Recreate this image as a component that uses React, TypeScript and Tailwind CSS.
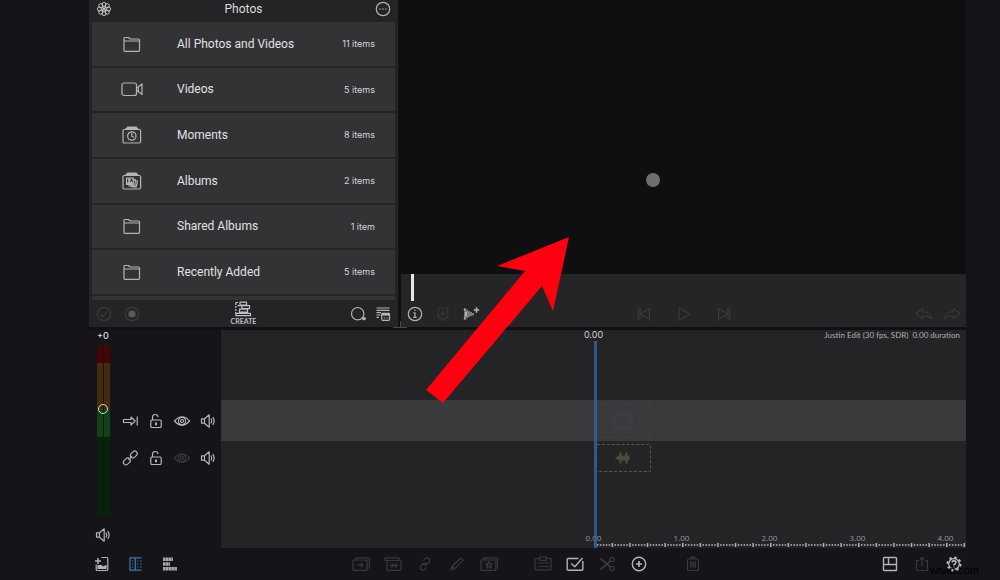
import { useState } from "react";
import type { ReactNode } from "react";
import clsx from "clsx";

type AlbumKind = "folder" | "video" | "moments" | "albums";

interface Album {
  name: string;
  count: string;
  kind: AlbumKind;
}

const ALBUMS: Album[] = [
  { name: "All Photos and Videos", count: "11 items", kind: "folder" },
  { name: "Videos", count: "5 items", kind: "video" },
  { name: "Moments", count: "8 items", kind: "moments" },
  { name: "Albums", count: "2 items", kind: "albums" },
  { name: "Shared Albums", count: "1 item", kind: "folder" },
  { name: "Recently Added", count: "5 items", kind: "folder" },
];

const RULER_LABELS = ["0.00", "1.00", "2.00", "3.00", "4.00"];

// 24px icon grid, thin strokes
function Icon({ children, size = "size-6" }: { children: ReactNode; size?: string }) {
  return (
    <svg
      viewBox="0 0 24 24"
      className={clsx("shrink-0", size)}
      fill="none"
      stroke="currentColor"
      strokeWidth="1.2"
      strokeLinejoin="round"
      aria-hidden="true"
    >
      {children}
    </svg>
  );
}

const albumIcons: Record<AlbumKind, ReactNode> = {
  folder: <path d="M4 18.5V6.6Q4 5.5 5 5.5H8.6L10 7H18.4Q19.5 7 19.5 8V18.3Q19.5 19.3 18.5 19.3H5Q4 19.3 4 18.3M4 9H19.5" />,
  video: (
    <>
      <rect x="2" y="6" width="14.5" height="12.5" rx="2" />
      <path d="M16.5 11L18.3 10V14.5L16.5 13.5M18.3 10L22 7V17.5L18.3 14.5" />
    </>
  ),
  moments: (
    <>
      <rect x="3" y="6.5" width="17.6" height="13.5" rx="1.2" />
      <path d="M5.5 5.3H18.2M7 4.2H16.8" />
      <circle cx="11.8" cy="13" r="4.2" />
      <path d="M11.8 10V13.2L14 14.3" />
    </>
  ),
  albums: (
    <>
      <rect x="3" y="6.5" width="17.6" height="13.5" rx="1.2" />
      <path d="M5.5 5.3H18.2M7 4.2H16.8" />
      <path d="M6.5 9.2H13.2V15.5H6.5ZM13.2 10.2L15.4 10.8L14.9 16.8L8.5 16.8M15.4 11.5L17.4 12.4L16.1 18.2L10.5 17.4" />
      <path d="M7 15.2L9 12.6L10.4 14L11.4 13L12.8 15.2Z" fill="currentColor" />
      <circle cx="9.3" cy="11" r="0.8" />
    </>
  ),
};

const icons = {
  flower: (
    <g strokeWidth="1">
      <circle cx="12" cy="7.4" r="2" />
      <circle cx="15.3" cy="8.7" r="2" />
      <circle cx="16.6" cy="12" r="2" />
      <circle cx="15.3" cy="15.3" r="2" />
      <circle cx="12" cy="16.6" r="2" />
      <circle cx="8.7" cy="15.3" r="2" />
      <circle cx="7.4" cy="12" r="2" />
      <circle cx="8.7" cy="8.7" r="2" />
      <path d="M12 9.4V14.6M9.4 12H14.6M10.1 10.1L13.9 13.9M13.9 10.1L10.1 13.9" />
    </g>
  ),
  more: (
    <>
      <circle cx="12" cy="12" r="6.7" />
      <path d="M8.2 12H9.8M11.2 12H12.8M14.2 12H15.8" />
    </>
  ),
  checkCircle: (
    <>
      <circle cx="12" cy="12" r="6.7" />
      <path d="M8.5 12L11 14.8L15.5 9" />
    </>
  ),
  record: (
    <>
      <circle cx="12" cy="12" r="6.7" stroke="#3d3c3f" />
      <circle cx="12" cy="12" r="3" fill="currentColor" />
    </>
  ),
  create: (
    <>
      <path d="M4.8 6V18.5" strokeDasharray="2 1" />
      <path d="M4.5 5.5H7M9 5.2H15.5V8H9ZM11 8.6H18.5V11.6H11V8.6M6.5 8.6H11M8.5 12.2H16.5V15.2H8.5ZM5 16.4H19.5V18.6H5Z" />
    </>
  ),
  search: (
    <>
      <circle cx="11.7" cy="11.7" r="6.2" />
      <path d="M16 16.2L18 18" strokeWidth="1.5" />
      <circle cx="18.3" cy="16.6" r="1" fill="currentColor" />
    </>
  ),
  sort: (
    <>
      <path d="M4.5 6H17.5M4.5 8.3H17.5M4.5 10.6H9M4.5 13H8.5M4.5 15.3H7" />
      <rect x="9.8" y="11.3" width="7.7" height="7" rx="0.8" />
      <path d="M10 12.6H17.3" strokeWidth="2" />
      <path d="M11.8 16H13M14.4 16H15.6" />
    </>
  ),
  info: (
    <>
      <circle cx="12" cy="12" r="6.7" />
      <path d="M10.5 10.8H12V15M10.3 15.3H13.7M11.3 8.3H12.5" />
    </>
  ),
  marker: <path d="M7.2 6H16.8V14.5L12 18.5L7.2 14.5ZM12 8.8V14M9.4 11.4H14.6" />,
  audioFx: (
    <>
      <path d="M6 6V18M8 7.5V16.5M10 9V15M12 10V14M14 11V13.5M5 7L7.5 12L5 17" />
      <path d="M14.8 8H20.2M17.5 5.3V10.7" strokeWidth="1.5" />
    </>
  ),
  prev: <path d="M6 6V18M8 6V18M17.5 6.2V17.8L8.5 12Z" />,
  play: <path d="M7 5.7L18 12L7 18.3Z" />,
  next: <path d="M18 6V18M16 6V18M6.5 6.2V17.8L15.5 12Z" />,
  undo: <path d="M4 11.5L10.5 6.5V9.5Q18.5 9.5 20 17Q16.5 13.5 10.5 13.8V16.5Z" />,
  redo: <path d="M20 11.5L13.5 6.5V9.5Q5.5 9.5 4 17Q7.5 13.5 13.5 13.8V16.5Z" />,
  insert: <path d="M5.5 10.5H13V8L17.2 12L13 16V13.5H5.5ZM19.2 7.5V16.5" />,
  link: (
    <>
      <rect x="5" y="13" width="7.6" height="5" rx="2.5" transform="rotate(-45 8.8 15.5)" />
      <rect x="12" y="6" width="7.6" height="5" rx="2.5" transform="rotate(-45 15.8 8.5)" />
      <path d="M10.5 13.8L14 10.2" />
    </>
  ),
  unlock: (
    <>
      <rect x="6.8" y="11" width="10.4" height="7.5" rx="1" />
      <path d="M8.5 11V8Q8.5 5.5 11.2 5.5Q13.8 5.5 14 8" />
      <path d="M12 13.5V16.2" strokeWidth="2" />
    </>
  ),
  eye: (
    <>
      <path d="M4.5 12Q12 3.5 19.5 12Q12 20.5 4.5 12Z" />
      <circle cx="12" cy="12" r="3.6" />
      <circle cx="12" cy="12" r="1.5" />
    </>
  ),
  speaker: (
    <>
      <path d="M5.5 9.8H8.5V14.2H5.5ZM8.5 9.8L13.2 5.8V18.2L8.5 14.2" />
      <path d="M15 9.5Q16.6 12 15 14.5M16.8 8.2Q19.4 12 16.8 15.8" />
    </>
  ),
  addMedia: (
    <>
      <path d="M11.5 5.5H16.8Q17.8 5.5 17.8 6.5V17.5Q17.8 18.5 16.8 18.5H7.2Q6.2 18.5 6.2 17.5V12.5" />
      <path d="M5 9H11M8 6V12" strokeWidth="1.5" />
      <path d="M8 13.5V16.5H16V13.5L13.5 15.2L11 13.5Z" fill="currentColor" />
    </>
  ),
  trackList: (
    <>
      <path d="M17.5 5.8H6V18.2H17.5M11.3 5.8V18.2" />
      <path d="M8 9H9.4M8 12H9.4M8 15H9.4M13 9H14.4M16 9H17.6M13 12H14.4M16 12H17.6M13 15H14.4M16 15H17.6" />
    </>
  ),
  trackBars: (
    <path d="M5 7.2H15M5 12H12M5 16.8H19" strokeWidth="3.4" strokeDasharray="2.6 0.3" />
  ),
  insertClip: (
    <>
      <path d="M6.5 8V5.8H20.3V16H18.5" />
      <rect x="4" y="8" width="14" height="10.3" rx="0.8" />
      <path d="M8 13.2H13.8M11.8 11L14 13.2L11.8 15.4" />
    </>
  ),
  overwrite: (
    <>
      <path d="M6.5 8.5H4V5.8H18V8.5" />
      <rect x="6" y="8.5" width="14" height="9.8" rx="0.8" />
      <path d="M8.5 13.5H17.5M10.5 11.3L12.5 13.5L10.5 15.7M15.5 11.3L13.5 13.5L15.5 15.7" />
    </>
  ),
  chain: (
    <path d="M10.5 8.5L12 6.6Q14 5 15.8 6.6Q17.5 8.5 16 10.4L13.8 12.4Q12 13.4 10.5 12M13.2 15.5L11.8 17.3Q9.8 19 8 17.3Q6.4 15.5 8 13.6L10.2 11.5Q12 10.5 13.5 12" />
  ),
  pencil: <path d="M6 18L7.2 14.3L15.8 5.8L18.2 8.2L9.7 16.8ZM7.2 14.3L9.7 16.8" />,
  starClip: (
    <>
      <path d="M6.5 8V5.8H20.3V16H18.8" />
      <path d="M4 8H18.8V18.3H4Z" />
      <path d="M12 9.8L13 12H15.3L13.5 13.5L14.2 16L12 14.5L9.8 16L10.5 13.5L8.7 12H11Z" />
    </>
  ),
  clipboard: (
    <>
      <path d="M8 6.5H4V17.8H20V6.5H16M8.5 5H15.5V8.3H8.5Z" />
      <path d="M8 11H18M8 14.5H18M5.8 11H6.8M5.8 14.5H6.8" />
    </>
  ),
  select: (
    <path d="M15.5 6.5H5.2Q4.2 6.5 4.2 7.5V17.3Q4.2 18.3 5.2 18.3H18.8Q19.8 18.3 19.8 17.3V9M8.2 11.5L11.8 14.7L19.5 6" strokeWidth="1.4" />
  ),
  scissors: (
    <>
      <path d="M5.5 6.5L15.5 15M5.5 17.5L15.5 9" strokeWidth="1.8" />
      <circle cx="17" cy="7.5" r="2.2" />
      <circle cx="17" cy="16.5" r="2.2" />
    </>
  ),
  add: (
    <>
      <circle cx="12" cy="12" r="6.7" strokeWidth="1.4" />
      <path d="M9 12H15M12 9V15" strokeWidth="1.7" />
    </>
  ),
  trash: (
    <>
      <rect x="6.5" y="7" width="11" height="11.5" rx="1" />
      <path d="M10 7V5.3H14V7M9.8 9.5V15.5M12 9.5V15.5M14.2 9.5V15.5" strokeWidth="1.4" />
    </>
  ),
  layout: (
    <>
      <rect x="5.5" y="5.5" width="13" height="13" rx="0.8" strokeWidth="1.4" />
      <path d="M5.5 12.5H18.5M10.5 5.5V12.5" strokeWidth="1.4" />
    </>
  ),
  share: <path d="M9 8.5H6.5V18.5H17.5V8.5H15M12 14.5V5.5M10 7.5L12 5.5L14 7.5" />,
  help: (
    <>
      <circle cx="12" cy="12" r="5.3" />
      <circle cx="12" cy="12" r="6.6" strokeWidth="1.8" strokeDasharray="2.4 2.8" />
      <path d="M9.9 10.4Q10.2 8.8 12 8.8Q14 8.9 14 10.5Q13.8 11.8 12 12.5V13.6M12 14.6V15.8" strokeWidth="1.5" />
    </>
  ),
};

type IconName = keyof typeof icons;

interface IconButtonProps {
  icon: IconName;
  label: string;
  width?: string;
  dim?: boolean;
  color?: string;
}

function IconButton({ icon, label, width = "w-8", dim, color = "text-[#b4b3b6]" }: IconButtonProps) {
  return (
    <button
      type="button"
      aria-label={label}
      disabled={dim}
      className={clsx("flex h-6 shrink-0 items-center justify-center", width, dim ? "text-[#39383b]" : color)}
    >
      <Icon>{icons[icon]}</Icon>
    </button>
  );
}

function PhotosPanel() {
  return (
    <section className="flex w-[309px] shrink-0 flex-col bg-[#242326]">
      <header className="grid h-[22px] grid-cols-3 content-center items-center px-px pb-1">
        <IconButton icon="flower" label="Photos source" width="w-7" color="text-[#c5c4c7]" />
        <h1 className="text-center font-['Roboto'] text-xs leading-4 text-[#dddcdf]">Photos</h1>
        <div className="flex justify-end">
          <IconButton icon="more" label="More" width="w-7" />
        </div>
      </header>
      <ul className="mx-[3px] grid h-[274px] auto-rows-fr">
        {ALBUMS.map((album) => (
          <li key={album.name} className="border-b-2 border-[#252427] bg-[#333235]">
            <button type="button" className="flex h-full w-full items-center pr-5 text-left">
              <span className="flex w-[79px] shrink-0 justify-center text-[#b4b3b6]">
                <Icon>{albumIcons[album.kind]}</Icon>
              </span>
              <span className="flex-1 pl-[6px] font-['Roboto'] text-xs text-[#e2e1e4]">{album.name}</span>
              <span className="text-[9px] text-[#d5d4d7]">{album.count}</span>
            </button>
          </li>
        ))}
      </ul>
      <div className="mx-[3px] h-1 bg-[#333235]" />
      <footer className="grid h-[27px] grid-cols-3 items-center px-px">
        <div className="flex">
          <IconButton icon="checkCircle" label="Mark used" width="w-7" dim />
          <IconButton icon="record" label="Record" width="w-7" color="text-[#5a595c]" />
        </div>
        <button type="button" className="flex flex-col items-center text-[#c0bfc2]">
          <Icon size="-my-1 size-6">{icons.create}</Icon>
          <span className="font-['Lato'] text-[7px] leading-[9px] font-bold">CREATE</span>
        </button>
        <div className="flex justify-end">
          <IconButton icon="search" label="Search" width="w-[26px]" />
          <IconButton icon="sort" label="Sort" width="w-[26px]" />
        </div>
      </footer>
    </section>
  );
}

function PreviewPanel() {
  return (
    <section className="flex min-w-0 flex-1 flex-col bg-[#0f0e11]">
      <div className="relative flex-1">
        <span className="absolute top-[173px] left-[245px] size-[14px] rounded-full bg-[#6f6e71]" />
      </div>
      <div className="bg-[#252427]">
        <div className="h-[27px] pl-[10px]">
          <div className="h-full w-[3px] bg-[#e6e5e8]" />
        </div>
        <div className="grid h-[26px] grid-cols-[1fr_auto_1fr] items-center">
          <div className="flex">
            <IconButton icon="info" label="Info" width="w-7" />
            <IconButton icon="marker" label="Marker" width="w-7" dim />
            <IconButton icon="audioFx" label="Audio effects" width="w-7" />
          </div>
          <div className="flex">
            <IconButton icon="prev" label="Previous" width="w-10" dim />
            <IconButton icon="play" label="Play" width="w-10" dim />
            <IconButton icon="next" label="Next" width="w-10" dim />
          </div>
          <div className="flex justify-end">
            <IconButton icon="undo" label="Undo" width="w-7" dim />
            <IconButton icon="redo" label="Redo" width="w-7" dim />
          </div>
        </div>
      </div>
    </section>
  );
}

function VolumeMeter() {
  const [volume, setVolume] = useState(64);

  return (
    <div className="flex w-7 shrink-0 flex-col items-center">
      <label htmlFor="volume" className="h-4 text-[9px] leading-[11px] font-medium text-[#dddcdf]">
        +0
      </label>
      <div className="relative flex w-[13px] flex-1 gap-px">
        {["left", "right"].map((channel) => (
          <div key={channel} className="flex flex-1 flex-col">
            <div className="h-[17px] bg-[#460408]" />
            <div className="h-[46px] bg-[#432c10]" />
            <div className="h-7 bg-[#134117]" />
            <div className="flex-1 bg-[#08220b]" />
          </div>
        ))}
        <input
          id="volume"
          type="range"
          min={0}
          max={100}
          value={volume}
          onChange={(e) => setVolume(Number(e.target.value))}
          className="absolute inset-0 h-full w-full appearance-none bg-transparent [direction:rtl] [writing-mode:vertical-lr] [&::-webkit-slider-thumb]:size-[10px] [&::-webkit-slider-thumb]:appearance-none [&::-webkit-slider-thumb]:rounded-full [&::-webkit-slider-thumb]:border [&::-webkit-slider-thumb]:border-[#d5d8b8]"
        />
      </div>
      <div className="pt-[7px] pb-px">
        <IconButton icon="speaker" label="Mute output" width="w-7" />
      </div>
    </div>
  );
}

function TrackControls({ icon, hidden }: { icon: "insert" | "link"; hidden?: boolean }) {
  return (
    <div className="flex">
      <IconButton icon={icon} label={icon === "link" ? "Link track" : "Insert mode"} width="w-[26px]" />
      <IconButton icon="unlock" label="Lock track" width="w-[26px]" />
      <IconButton icon="eye" label="Show track" width="w-[26px]" dim={hidden} />
      <IconButton icon="speaker" label="Mute track" width="w-[26px]" />
    </div>
  );
}

function Ruler() {
  const ticks = Array.from({ length: 240 }, (_, i) => i);

  return (
    <div className="ml-[calc(50%-44px)] overflow-hidden">
      <div className="flex font-['Open_Sans'] text-[8px] leading-[10px] text-[#98979a]">
        {RULER_LABELS.map((label) => (
          <span key={label} className="w-[88px] shrink-0 text-center">
            {label}
          </span>
        ))}
      </div>
      <svg className="ml-11 block h-[5px] w-full" aria-hidden="true">
        {ticks.map((i) => (
          <rect
            key={i}
            x={(i * 88) / 30}
            y={i % 6 === 0 ? 0 : 1}
            width="1.5"
            height={i % 6 === 0 ? 4 : 2}
            fill={i % 6 === 0 ? "#b4b3b6" : "#98979a"}
          />
        ))}
      </svg>
    </div>
  );
}

function Timeline() {
  return (
    <section className="relative flex min-w-0 flex-1 flex-col bg-[#242326]">
      <header className="grid h-[70px] grid-cols-3 items-start leading-[10px]">
        <span />
        <span className="text-center text-[9px] text-[#d0cfd2]">0.00</span>
        <span className="pr-[6px] text-right font-['Lato'] text-[8px] whitespace-pre text-[#b0afb2]">
          Justin Edit (30 fps, SDR)  0.00 duration
        </span>
      </header>
      <div className="flex h-[41px] items-center bg-[#3a393c] pl-[50%]">
        <div className="ml-px flex h-[35px] w-[56px] items-center justify-center border border-dashed border-[#3f4248] text-[#3a4450]">
          <Icon>
            <rect x="3" y="5" width="18" height="14" rx="1" />
            <path d="M6 5V19M18 5V19" strokeDasharray="2 1.5" />
          </Icon>
        </div>
      </div>
      <div className="pt-[3px] pl-[50%]">
        <div className="ml-px flex h-7 w-[56px] items-center justify-center rounded-xs border border-dashed border-[#575d3f] text-[#4a5039]">
          <Icon>
            <path
              d="M5.5 11V13M7.5 9.5V14.5M9.5 6.5V17.5M11.5 9.5V14.5M13.5 9.5V14.5M15.5 6.5V17.5M17.5 9.5V14.5"
              strokeWidth="1.9"
            />
          </Icon>
        </div>
      </div>
      <div className="flex-1" />
      <Ruler />
      <div className="absolute top-[11px] bottom-0 left-1/2 w-[3px] bg-[#315e96]/90" />
    </section>
  );
}

function BottomToolbar() {
  return (
    <footer className="relative flex h-8 items-center pr-[30px] pl-[85px]">
      <div className="flex">
        <IconButton icon="addMedia" label="Add media" width="w-[34px]" />
        <IconButton icon="trackList" label="Track headers" width="w-[34px]" color="text-[#3f78b5]" />
        <IconButton icon="trackBars" label="Track heights" width="w-[34px]" color="text-[#a5a4a7]" />
      </div>
      <div className="flex flex-1 justify-center gap-[22px] pr-2">
        <div className="flex">
          <IconButton icon="insertClip" label="Insert clip" dim />
          <IconButton icon="overwrite" label="Overwrite" dim />
          <IconButton icon="chain" label="Link clips" dim />
          <IconButton icon="pencil" label="Edit clip" dim />
          <IconButton icon="starClip" label="Favourite" dim />
        </div>
        <div className="flex">
          <IconButton icon="clipboard" label="Clipboard" dim />
          <IconButton icon="select" label="Select" />
          <IconButton icon="scissors" label="Split" dim />
          <IconButton icon="add" label="Add" />
        </div>
        <IconButton icon="trash" label="Delete" dim />
      </div>
      <div className="flex">
        <IconButton icon="layout" label="Layout" />
        <IconButton icon="share" label="Share" dim />
        <IconButton icon="help" label="Help and settings" color="text-[#c5c4c7]" />
      </div>
      <span className="absolute right-[21px] bottom-[3px] font-['Liberation_Sans'] text-[11px] leading-[14px] text-black">
        wtvid.com
      </span>
    </footer>
  );
}

export default function App() {
  return (
    <div className="relative flex min-h-screen flex-col overflow-hidden bg-[#161418] font-['Inter',sans-serif]">
      <div className="flex pr-[34px] pl-[89px]">
        <div className="relative flex flex-1 gap-[3px] bg-[#100f12] pb-[3px]">
          <PhotosPanel />
          <PreviewPanel />
          {/* pane resize handle */}
          <div className="absolute bottom-[2px] left-[304px] flex w-[14px] justify-center border-b border-[#48474a]">
            <div className="h-[6px] w-px bg-[#48474a]" />
          </div>
        </div>
      </div>
      <div className="flex flex-1 pr-[34px] pl-[89px]">
        <aside className="flex w-[132px] shrink-0">
          <VolumeMeter />
          <div className="flex flex-col gap-[13px] pt-[79px]">
            <TrackControls icon="insert" />
            <TrackControls icon="link" hidden />
          </div>
        </aside>
        <Timeline />
      </div>
      <BottomToolbar />
      <svg viewBox="0 0 143 166" className="pointer-events-none absolute top-[237px] left-[426px] h-[166px] w-[143px]" aria-hidden="true">
        <polygon points="143,0 71,29 99,34 0,153 17,166 116,49 127,74" fill="#ff0010" />
      </svg>
    </div>
  );
}
